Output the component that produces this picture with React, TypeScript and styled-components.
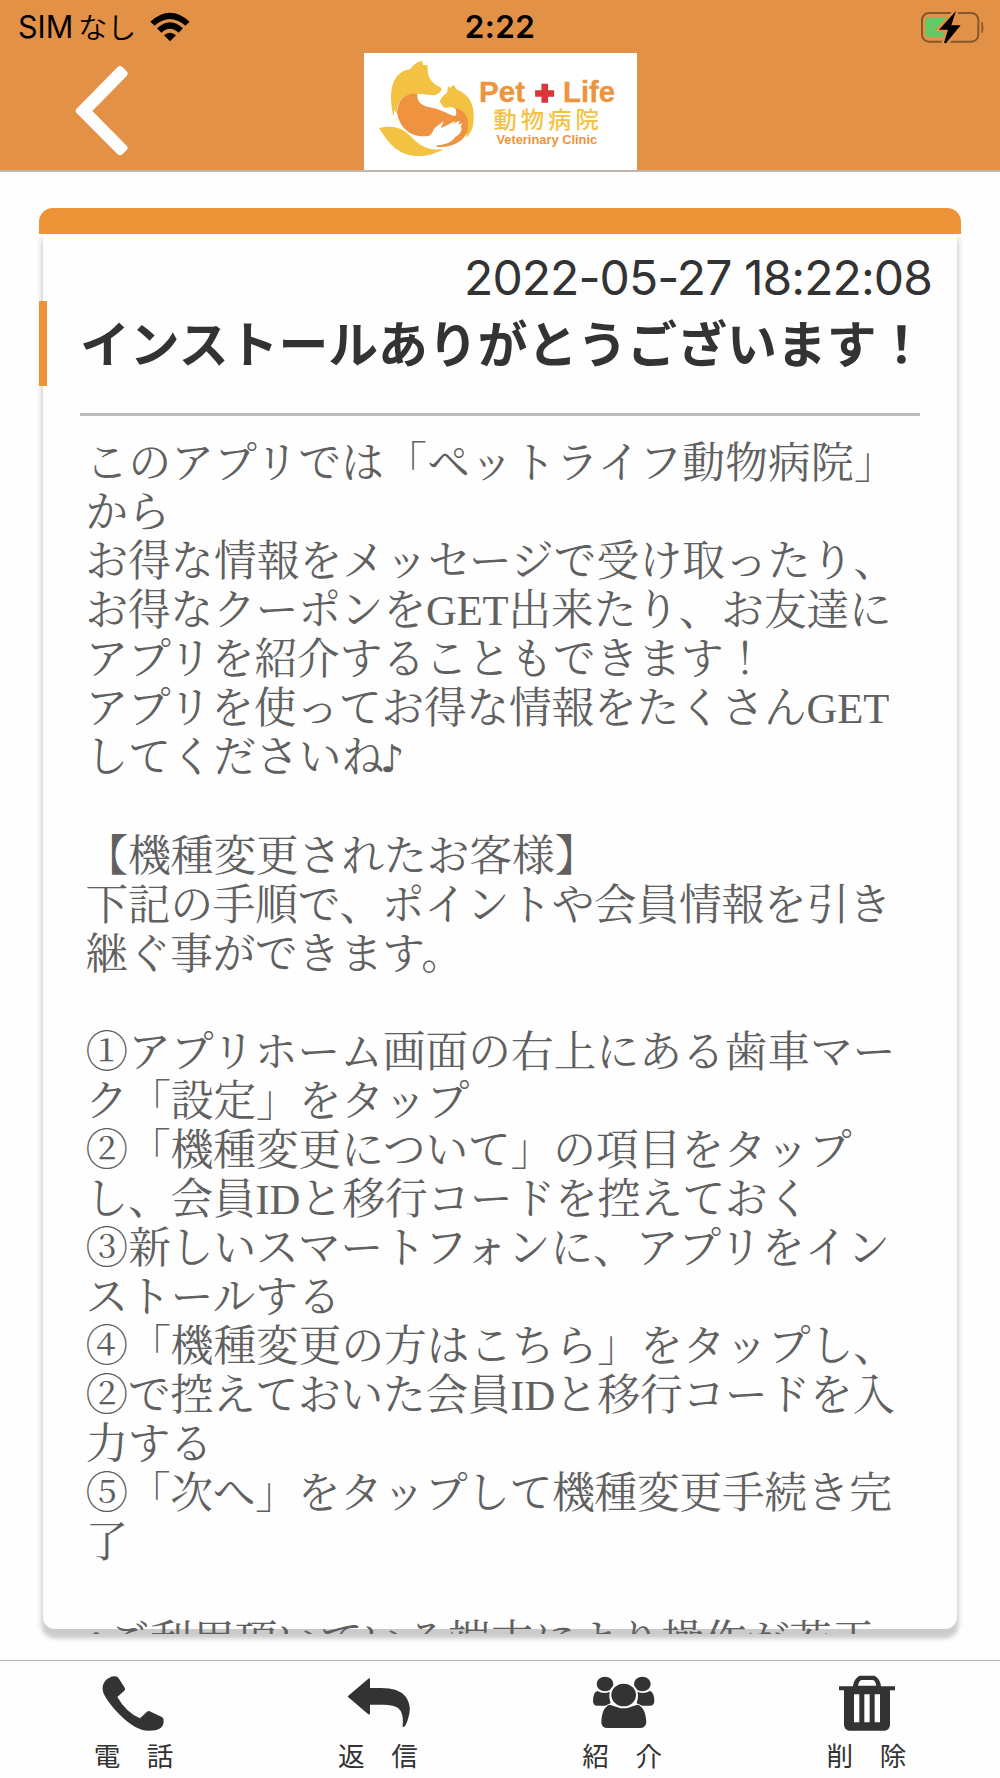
import React from "react";
import styled, { createGlobalStyle } from "styled-components";

const sans = `"Inter", "Noto Sans CJK JP", sans-serif`;
const mincho = `"Liberation Serif", "Noto Serif CJK JP", "Noto Sans CJK JP", serif`;

const GlobalStyle = createGlobalStyle`
  *, *::before, *::after { box-sizing: border-box; }
  body { margin: 0; background: #fff; }
`;

const Screen = styled.div`
  width: 1000px;
  height: 1778px;
  display: flex;
  flex-direction: column;
  overflow: hidden;
  background: #fefefe;
  font-family: ${sans};
  color: #333;
`;

const Header = styled.header`
  height: 172px;
  background: #e29147;
  border-bottom: 2px solid #beb7b0;
`;

const StatusBar = styled.div`
  height: 52.5px;
  display: grid;
  grid-template-columns: 1fr auto 1fr;
  align-items: center;
  padding: 0 14px 0 18px;
  color: #000;
`;

const Carrier = styled.div`
  display: flex;
  align-items: center;
  font-size: 30.5px;
  line-height: 52px;
  white-space: pre;
`;

const Kana = styled.span`
  font-family: "Noto Sans CJK JP", sans-serif;
  font-weight: 350;
  font-size: 29px;
  line-height: 50px;
  margin: -2px 0 0 5px;
`;

const WifiIcon = styled.svg`
  width: 40px;
  height: 30px;
  margin-left: 14px;
`;

const Clock = styled.div`
  margin-left: -4px;
  font-size: 31.5px;
  font-weight: 600;
  line-height: 54px;
  letter-spacing: 0.4px;
`;

const BatteryIcon = styled.svg`
  width: 66px;
  height: 34px;
  justify-self: end;
`;

const NavRow = styled.div`
  height: 117.5px;
  display: grid;
  grid-template-columns: 1fr 273px 1fr;
  column-gap: 0.5px;
`;

const BackButton = styled.button`
  width: 60px;
  height: 96px;
  margin: 10px 0 0 72px;
  padding: 0;
  border: 0;
  background: none;
  svg { display: block; }
`;

const Logo = styled.svg`
  width: 273.5px;
  height: 117.5px;
  background: #fff;
`;

const Card = styled.main`
  margin: 35.5px 39px 0;
  height: 1421.5px;
  flex: none;
`;

const CardTop = styled.div`
  position: relative;
  height: 26.5px;
  border-radius: 14px 14px 0 0;
  background: #ed9438;
`;

const CardBody = styled.article`
  height: 1395px;
  margin: 0 4px;
  display: flex;
  flex-direction: column;
  background: #fefefe;
  border-radius: 0 0 12px 12px;
  box-shadow: 0 6px 4px 3px rgba(0, 0, 0, 0.11), 0 10px 4px 0 rgba(0, 0, 0, 0.1);
`;

const DateLine = styled.time`
  height: 67px;
  padding-right: 25px;
  font-size: 48px;
  line-height: 87px;
  letter-spacing: -0.92px;
  text-align: right;
`;

const Title = styled.h1`
  height: 85px;
  margin: 0 0 0 -4px;
  padding-left: 33px;
  border-left: 8px solid #ed9438;
  font-family: "Noto Sans CJK JP", sans-serif;
  font-size: 49.85px;
  font-weight: 700;
  line-height: 80px;
  white-space: nowrap;
`;

const Rule = styled.hr`
  width: 840px;
  height: 3px;
  margin: 27px 0 0 37px;
  border: 0;
  background: #bbb;
`;

const Message = styled.div`
  flex: 1;
  margin-bottom: -5px;
  padding: 23px 0 0 42.5px;
  overflow: hidden;
  font-family: ${mincho};
  font-size: 42.67px;
  font-weight: 400;
  line-height: 49.07px;
  color: #606060;
  white-space: pre;
  text-spacing-trim: space-all;
`;

const Line = styled.div<{ $tracking: number }>`
  height: 49.07px;
  letter-spacing: ${(p) => p.$tracking}px;
`;

const Note = styled.span`
  margin-left: -4px;
  font-family: "DejaVu Sans", sans-serif;
  font-size: 38px;
  font-weight: 700;
  line-height: 1;
`;

const Bullet = styled.span`
  position: relative;
  top: -3px;
  font-feature-settings: "halt";
`;

const TabBar = styled.nav`
  margin-top: auto;
  height: 118px;
  flex: none;
  display: grid;
  grid-template-columns: repeat(4, 244.3px);
  justify-content: center;
  border-top: 1px solid #b4b4b4;
`;

const Tab = styled.a`
  display: flex;
  flex-direction: column;
  align-items: center;
  padding-top: 12px;
`;

const TabIcon = styled.svg`
  width: 66px;
  height: 60px;
  fill: #333;
`;

const TabLabel = styled.span`
  margin-top: 2px;
  font-family: "Noto Sans CJK JP", sans-serif;
  font-size: 26.6px;
  line-height: 40px;
  white-space: pre;
`;

type MessageLine = { text: React.ReactNode; tracking?: number };

const lines: MessageLine[] = [
  { text: "このアプリでは「ペットライフ動物病院」", tracking: 0.27 },
  { text: "から", tracking: -0.6 },
  { text: "お得な情報をメッセージで受け取ったり、", tracking: 0.15 },
  { text: "お得なクーポンをGET出来たり、お友達に", tracking: -0.1 },
  { text: "アプリを紹介することもできます！" },
  { text: "アプリを使ってお得な情報をたくさんGET", tracking: -0.14 },
  { text: <>してくださいね<Note>♪</Note></> },
  { text: "" },
  { text: "【機種変更されたお客様】" },
  { text: "下記の手順で、ポイントや会員情報を引き", tracking: -0.2 },
  { text: "継ぐ事ができます。", tracking: -0.25 },
  { text: "" },
  { text: "①アプリホーム画面の右上にある歯車マー", tracking: 0.07 },
  { text: "ク「設定」をタップ" },
  { text: "②「機種変更について」の項目をタップ", tracking: -0.05 },
  { text: "し、会員IDと移行コードを控えておく", tracking: -0.17 },
  { text: "③新しいスマートフォンに、アプリをイン" },
  { text: "ストールする" },
  { text: "④「機種変更の方はこちら」をタップし、" },
  { text: "②で控えておいた会員IDと移行コードを入", tracking: -0.17 },
  { text: "力する", tracking: -0.4 },
  { text: "⑤「次へ」をタップして機種変更手続き完", tracking: -0.23 },
  { text: "了" },
  { text: "" },
  { text: <><Bullet>・</Bullet>ご利用頂いている端末により操作が若干</> },
];

// Tab glyphs share a 198x180 canvas, three units per pixel.
const tabs = [
  {
    label: "電　話",
    icon: (
      <path d="M25 14 Q36 8 49 11 Q52 13 71 44 Q74 49 70 53 L49 72 Q76 119 117 136 L138 116 Q143 112 149 116 L184 133 Q189 137 188 146 Q187 173 144 173 Q104 174 54 123 Q0 66 5 41 Q8 22 25 14Z" />
    ),
  },
  {
    label: "返　信",
    icon: (
      <path
        transform="translate(3 0)"
        d="M7 68 L67 17 Q72 13 72 20 L72 45 L105 45 Q158 45 178 70 Q199 98 187 134 Q182 153 175 161 Q170 164 170 158 Q174 121 157 106 Q144 95 112 95 L72 95 L72 120 Q71 128 65 122 L7 73 Q4 71 7 68Z"
      />
    ),
  },
  {
    label: "紹　介",
    icon: (
      <g transform="translate(5 0)">
        <ellipse cx="43" cy="33" rx="25" ry="22" />
        <ellipse cx="155" cy="33" rx="25" ry="22" />
        <path d="M20 54 Q42 66 62 54 Q53 71 60 91 Q50 95 44 98 L20 98 Q7 98 7 83 Q8 57 20 54Z" />
        <path d="M178 54 Q156 66 136 54 Q145 71 138 91 Q148 95 154 98 L178 98 Q191 98 191 83 Q190 57 178 54Z" />
        <path d="M57 95 Q98 112 141 95 Q165 103 167 149 Q164 165 148 165 L50 165 Q34 165 32 149 Q33 103 57 95Z" />
        <ellipse cx="99" cy="66" rx="40" ry="37" stroke="#fefefe" strokeWidth="6" />
      </g>
    ),
  },
  {
    label: "削　除",
    icon: (
      <path
        transform="translate(3 0)"
        fillRule="evenodd"
        d="M15 40 L57 40 Q59 18 76 8 L122 8 Q139 18 141 40 L183 40 L183 52 L168 52 L168 157 Q166 172 153 173 L45 173 Q32 172 30 157 L30 52 L15 52Z M72 38 L127 38 Q125 25 117 21 L82 21 Q74 25 72 38Z M60 64 L76 64 L76 148 L60 148Z M91 64 L107 64 L107 148 L91 148Z M122 64 L138 64 L138 148 L122 148Z"
      />
    ),
  },
];

const Word = styled.text<{ $outline?: number }>`
  font-family: "Liberation Sans", sans-serif;
  font-weight: 700;
  fill: #ed943d;
  stroke: #ed943d;
  stroke-width: ${(p) => p.$outline ?? 0}px;
  stroke-linejoin: round;
`;

function ClinicLogo() {
  return (
    <Logo viewBox="42 157 820 354" preserveAspectRatio="none">
      <path
        fill="#f4c242"
        d="M131 350 C112 270 127 213 181 205 C190 191 203 183 216 181 L219 193 L232 193 L234 221 C241 240 250 250 272 261 C279 268 267 284 250 284 C231 283 216 281 202 280 C165 278 139 298 140 340 L133 329Z"
      />
      <path
        fill="#f4c242"
        d="M269 303 C274 289 286 281 291 276 L294 258 L301 262 L311 253 L320 267 C354 279 374 311 371 354 C370 385 362 400 347 412 C353 386 360 334 316 326 C302 315 291 325 281 321Z"
      />
      <path
        fill="#ef9340"
        d="M141 336 C143 296 167 276 202 279 C199 309 219 317 249 323 C282 331 297 344 314 347 C322 345 318 331 316 323 C350 330 358 360 353 389 C344 422 310 443 260 440 L260 435 C292 433 308 422 316 409 C335 399 337 386 332 379 L337 368 L326 373 L328 361 L309 370 L315 361 L291 375 L272 384 L281 362 L259 379 C247 387 249 401 235 407 C191 414 149 389 141 336Z"
      />
      <path
        fill="#f4c242"
        d="M87 383 C130 372 160 384 183 409 C214 442 239 450 280 447 C250 464 222 469 195 467 C137 462 113 423 87 383Z"
      />
      <Word x="387" y="306" fontSize="87" $outline={1} textLength="138" lengthAdjust="spacingAndGlyphs">Pet</Word>
      <Word x="639" y="306" fontSize="87" $outline={1} textLength="156" lengthAdjust="spacingAndGlyphs">Life</Word>
      <path fill="#d9363a" d="M574 250h20v19h18v20h-18v18h-20v-18h-19v-20h19z" />
      <text x="430" y="384" fontFamily="Noto Sans CJK JP" fontWeight="500" fontSize="70" fill="#f4c242" textLength="316">動物病院</text>
      <Word x="439" y="432" fontSize="40" textLength="302" lengthAdjust="spacingAndGlyphs">Veterinary Clinic</Word>
    </Logo>
  );
}

export default function App() {
  return (
    <>
      <GlobalStyle />
      <Screen>
        <Header>
          <StatusBar>
            <Carrier>
              SIM<Kana>なし</Kana>
              <WifiIcon viewBox="0 0 120 90">
                <path d="M1 29Q60-25 119 29L106 41Q60 1 14 41Z" />
                <path d="M21 49Q60 13 99 49L86 62Q60 39 34 62Z" />
                <path d="M42 70Q60 55 78 70L60 88Z" />
              </WifiIcon>
            </Carrier>
            <Clock>2:22</Clock>
            <BatteryIcon viewBox="0 0 198 102">
              <rect x="6" y="9" width="169" height="86" rx="21" fill="none" stroke="#85572c" strokeWidth="6" />
              <path d="M186 36Q192 52 186 68Z" fill="#85572c" stroke="#85572c" strokeWidth="3" />
              <rect x="16" y="21" width="88" height="61" rx="10" fill="#66c766" />
              <path d="M107 4L57 59H84L72 98L78 100L122 46H94L107 6Z" fill="#000" stroke="#e29147" strokeWidth="15" paintOrder="stroke" strokeLinejoin="round" />
            </BatteryIcon>
          </StatusBar>
          <NavRow>
            <BackButton aria-label="戻る">
              <svg width="60" height="96" viewBox="0 0 180 288">
                <path d="M137 12Q144 6 151 12L164 25Q170 32 164 39L61 144L164 248Q170 254 164 261L151 274Q144 280 137 274L13 149Q8 144 13 138Z" fill="#fff" />
              </svg>
            </BackButton>
            <ClinicLogo />
          </NavRow>
        </Header>
        <Card>
          <CardTop />
          <CardBody>
            <DateLine>2022-05-27 18:22:08</DateLine>
            <Title>インストールありがとうございます！</Title>
            <Rule />
            <Message>
              {lines.map((line, i) => (
                <Line key={i} $tracking={line.tracking ?? 0}>
                  {line.text}
                </Line>
              ))}
            </Message>
          </CardBody>
        </Card>
        <TabBar>
          {tabs.map((tab) => (
            <Tab key={tab.label}>
              <TabIcon viewBox="0 0 198 180">{tab.icon}</TabIcon>
              <TabLabel>{tab.label}</TabLabel>
            </Tab>
          ))}
        </TabBar>
      </Screen>
    </>
  );
}
